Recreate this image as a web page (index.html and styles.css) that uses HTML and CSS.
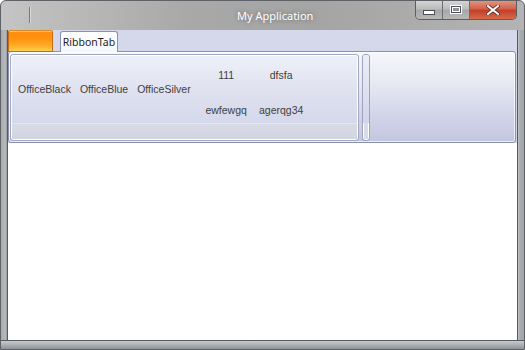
FILE: index.html
```html
<!DOCTYPE html>
<html>
<head>
<meta charset="utf-8">
<link rel="stylesheet" href="styles.css">
</head>
<body>
<div class="window">
  <div class="titlebar">
    <div class="qat"><span class="qat-sep"></span></div>
    <div class="title">My Application</div>
    <div class="spacer"></div>
    <div class="caption-btns">
      <div class="cbtn cbtn-min"><span class="min-glyph"></span></div>
      <div class="cbtn cbtn-max"><span class="max-glyph"></span></div>
      <div class="cbtn cbtn-close">
        <svg width="14" height="10" viewBox="0 0 14 10"><path d="M2 1 L12 9 M12 1 L2 9" stroke="#5a2a22" stroke-width="3.6" stroke-linecap="square"/><path d="M2 1 L12 9 M12 1 L2 9" stroke="#ffffff" stroke-width="2" stroke-linecap="square"/></svg>
      </div>
    </div>
  </div>
  <div class="middle">
    <div class="frame-l"></div>
    <div class="client">
      <div class="ribbon">
        <div class="tabs">
          <div class="app-btn"></div>
          <div class="tab">RibbonTab</div>
        </div>
        <div class="panel">
          <div class="group">
            <div class="group-body">
              <div class="big-btns">
                <span class="rb">OfficeBlack</span>
                <span class="rb">OfficeBlue</span>
                <span class="rb">OfficeSilver</span>
              </div>
              <div class="small-grid">
                <span class="sb">111</span>
                <span class="sb">dfsfa</span>
                <span class="sb">ewfewgq</span>
                <span class="sb">agerqg34</span>
              </div>
            </div>
            <div class="group-caption"></div>
          </div>
          <div class="scroller">
            <div class="scroller-top"></div>
            <div class="scroller-bot"></div>
          </div>
        </div>
      </div>
      <div class="content"></div>
    </div>
    <div class="frame-r"></div>
  </div>
  <div class="frame-b"></div>
</div>
</body>
</html>
```
FILE: styles.css
```css
html, body {
  margin: 0;
  padding: 0;
}
body {
  width: 525px;
  height: 350px;
  overflow: hidden;
  background: #ffffff;
  font-family: "Noto Sans", "Liberation Sans", sans-serif;
}
.window {
  width: 525px;
  height: 350px;
  display: flex;
  flex-direction: column;
  box-sizing: border-box;
  border: 1px solid #5e6166;
  border-radius: 6px 6px 0 0;
  background: linear-gradient(90deg, #c4c4c4 0%, #a9a9a9 35%, #a4a4a4 60%, #b4b4b4 100%);
  overflow: hidden;
}
.titlebar {
  height: 29px;
  display: flex;
  align-items: flex-start;
  flex-shrink: 0;
}
.qat {
  width: 236px;
  height: 29px;
  display: flex;
  align-items: flex-start;
}
.qat-sep {
  display: block;
  width: 1px;
  height: 16px;
  margin-left: 28px;
  margin-top: 6px;
  background: #7a7a7a;
  box-shadow: 1px 0 0 #d8d8d8;
}
.title {
  margin-top: 8px;
  color: #ffffff;
  font-size: 11px;
  line-height: 14px;
  text-shadow: 0 0 4px rgba(60,60,60,0.6);
}
.spacer { flex: 1; }
.caption-btns {
  display: flex;
  margin-right: 7px;
  margin-top: -1px;
  height: 19px;
  border: 1px solid #5a5d63;
  border-top: none;
  border-radius: 0 0 5px 5px;
  overflow: hidden;
}
.cbtn {
  height: 19px;
  display: flex;
  align-items: center;
  justify-content: center;
}
.cbtn-min, .cbtn-max {
  width: 27px;
  background: linear-gradient(180deg, #d8d8d8 0%, #bdbdbd 45%, #a8a8a8 55%, #b8b8b8 100%);
  border-right: 1px solid #6a6d72;
  box-sizing: border-box;
}
.cbtn-close {
  width: 46px;
  background: linear-gradient(180deg, #e39a86 0%, #d3634b 45%, #c2402a 55%, #d66a4a 100%);
}
.min-glyph {
  display: block;
  width: 10px;
  height: 3px;
  margin-top: 5px;
  background: #ffffff;
  border: 1px solid #4c4f55;
}
.max-glyph {
  display: block;
  width: 8px;
  height: 5px;
  border: 1px solid #4c4f55;
  box-shadow: inset 0 0 0 1px #ffffff, 0 0 0 1px #ffffff;
  background: #8f9296;
}
.middle {
  flex: 1;
  display: flex;
  min-height: 0;
}
.frame-l, .frame-r {
  width: 7px;
  flex-shrink: 0;
}
.frame-l {
  background: linear-gradient(90deg, #a8abaf 0%, #b7b9bc 60%, #8a8d90 100%);
  box-shadow: inset -1px 0 0 #55585c;
}
.frame-r {
  background: linear-gradient(90deg, #d4d6d8 0%, #a8abaf 40%, #a2a5a8 100%);
  box-shadow: inset 1px 0 0 #55585c;
}
.frame-b {
  height: 8px;
  flex-shrink: 0;
  background: linear-gradient(180deg, #c9cbce 0%, #a6a9ad 60%, #8f9296 100%);
  border-top: 1px solid #55585c;
}
.client {
  flex: 1;
  display: flex;
  flex-direction: column;
  background: #ffffff;
}
.ribbon {
  height: 113px;
  background: #d5d8ea;
  display: flex;
  flex-direction: column;
  flex-shrink: 0;
}
.tabs {
  height: 21px;
  display: flex;
  align-items: flex-start;
  position: relative;
  z-index: 1;
}
.app-btn {
  width: 43px;
  height: 20px;
  border: 1px solid #c56c12;
  border-top-color: #d98a2a;
  border-radius: 2px 2px 0 0;
  background: linear-gradient(180deg, #ff8c10 0%, #ff930f 40%, #ffae2a 75%, #ffcf55 100%);
  box-shadow: inset 0 1px 0 rgba(255,220,160,0.6);
}
.tab {
  margin-left: 7px;
  margin-top: 1px;
  width: 56px;
  height: 20px;
  border: 1px solid #8a90b2;
  border-bottom: none;
  border-radius: 3px 3px 0 0;
  background: linear-gradient(180deg, #ffffff 0%, #f6f7fc 100%);
  font-size: 10.5px;
  line-height: 20px;
  text-align: center;
  color: #1e1e1e;
}
.panel {
  height: 92px;
  margin-right: 1px;
  box-sizing: border-box;
  border: 1px solid #8b90b0;
  border-radius: 3px;
  background: linear-gradient(180deg, #f7f8fc 0%, #e6e8f3 35%, #d2d5e9 70%, #c3c6e0 100%);
  box-shadow: inset 0 0 0 1px rgba(255,255,255,0.7);
  display: flex;
  align-items: flex-start;
  padding: 2px 0 0 1px;
  gap: 3px;
}
.group {
  width: 349px;
  height: 87px;
  box-sizing: border-box;
  border: 1px solid #a3a7c3;
  border-radius: 3px;
  box-shadow: inset 0 0 0 1px #ffffff;
  background: linear-gradient(180deg, #eef0f8 0%, #e0e2f0 40%, #d0d3e8 100%);
  display: flex;
  flex-direction: column;
  overflow: hidden;
}
.group-body {
  flex: 1;
  display: flex;
  align-items: center;
  padding-left: 7px;
  color: #3e3e3e;
  font-family: "Liberation Sans", Arial, sans-serif;
  font-size: 10.5px;
}
.big-btns {
  display: flex;
  gap: 9px;
}
.small-grid {
  align-self: flex-start;
  margin-top: 12px;
  margin-left: 9px;
  display: grid;
  grid-template-columns: 53px 57px;
  grid-template-rows: 16px 16px;
  row-gap: 19px;
  text-align: center;
  line-height: 16px;
}
.group-caption {
  height: 15px;
  margin: 0 1px 1px 1px;
  background: linear-gradient(180deg, #d8dae6 0%, #d2d4e0 100%);
  border-top: 1px solid #e4e6ef;
}
.scroller {
  width: 8px;
  height: 87px;
  box-sizing: border-box;
  border: 1px solid #9ea2bf;
  border-radius: 3px;
  box-shadow: inset 0 0 0 1px #ffffff;
  display: flex;
  flex-direction: column;
  overflow: hidden;
}
.scroller-top {
  flex: 1;
  background: linear-gradient(180deg, #eceef7 0%, #d2d5e8 100%);
}
.scroller-bot {
  height: 16px;
  margin: 0 1px 1px 1px;
  background: #d9dbe6;
}
.content {
  flex: 1;
  background: #ffffff;
}
```
